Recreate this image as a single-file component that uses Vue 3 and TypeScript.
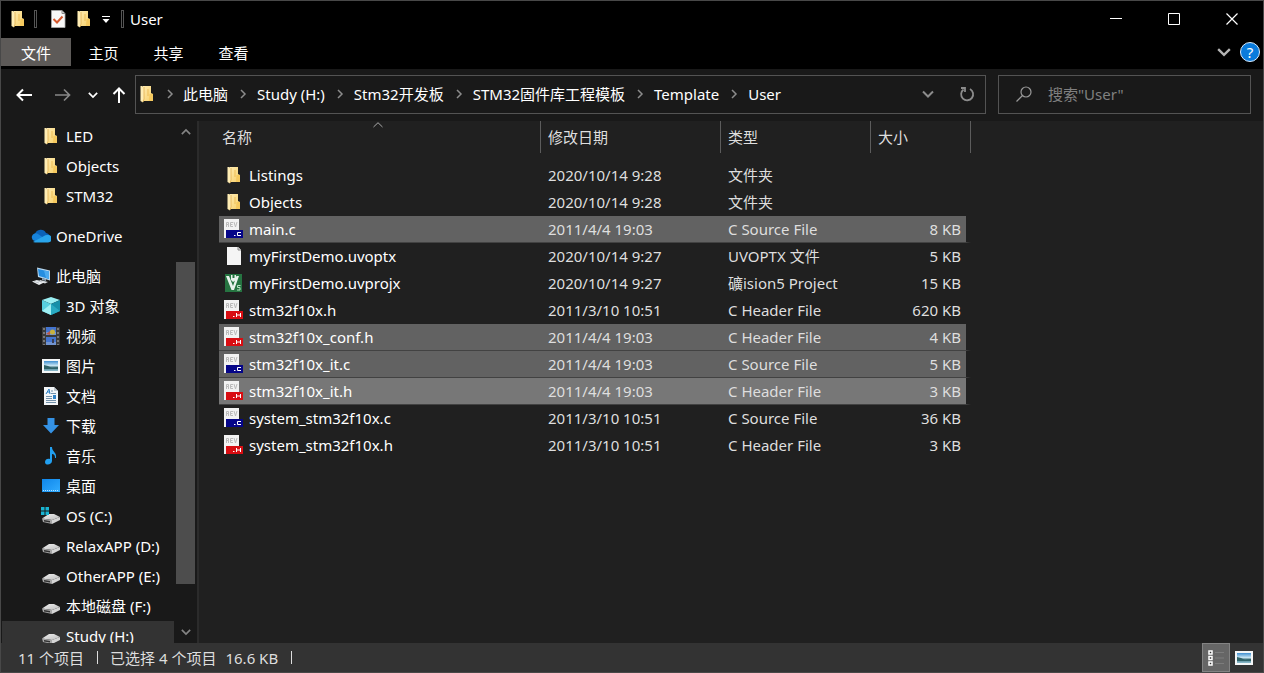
<script setup lang="ts">
import { ref } from 'vue'

interface Place {
  icon: string
  label: string
  level: number
  spaced?: boolean
  current?: boolean
}

interface FileRow {
  icon: string
  name: string
  date: string
  type: string
  size: string
  state?: 'selected' | 'focused'
}

const tabs = ['主页', '共享', '查看']
const crumbs = ['此电脑', 'Study (H:)', 'Stm32开发板', 'STM32固件库工程模板', 'Template', 'User']
const query = ref('')

const places: Place[] = [
  { icon: 'folder', label: 'LED', level: 2 },
  { icon: 'folder', label: 'Objects', level: 2 },
  { icon: 'folder', label: 'STM32', level: 2 },
  { icon: 'cloud', label: 'OneDrive', level: 1, spaced: true },
  { icon: 'pc', label: '此电脑', level: 1, spaced: true },
  { icon: 'cube', label: '3D 对象', level: 2 },
  { icon: 'film', label: '视频', level: 2 },
  { icon: 'picture', label: '图片', level: 2 },
  { icon: 'document', label: '文档', level: 2 },
  { icon: 'download', label: '下载', level: 2 },
  { icon: 'music', label: '音乐', level: 2 },
  { icon: 'desktop', label: '桌面', level: 2 },
  { icon: 'osdrive', label: 'OS (C:)', level: 2 },
  { icon: 'drive', label: 'RelaxAPP (D:)', level: 2 },
  { icon: 'drive', label: 'OtherAPP (E:)', level: 2 },
  { icon: 'drive', label: '本地磁盘 (F:)', level: 2 },
  { icon: 'drive', label: 'Study (H:)', level: 2, current: true },
]

const files: FileRow[] = [
  { icon: 'folder', name: 'Listings', date: '2020/10/14 9:28', type: '文件夹', size: '' },
  { icon: 'folder', name: 'Objects', date: '2020/10/14 9:28', type: '文件夹', size: '' },
  { icon: 'csource', name: 'main.c', date: '2011/4/4 19:03', type: 'C Source File', size: '8 KB', state: 'selected' },
  { icon: 'blank', name: 'myFirstDemo.uvoptx', date: '2020/10/14 9:27', type: 'UVOPTX 文件', size: '5 KB' },
  { icon: 'uvision', name: 'myFirstDemo.uvprojx', date: '2020/10/14 9:27', type: '礦ision5 Project', size: '15 KB' },
  { icon: 'cheader', name: 'stm32f10x.h', date: '2011/3/10 10:51', type: 'C Header File', size: '620 KB' },
  { icon: 'cheader', name: 'stm32f10x_conf.h', date: '2011/4/4 19:03', type: 'C Header File', size: '4 KB', state: 'selected' },
  { icon: 'csource', name: 'stm32f10x_it.c', date: '2011/4/4 19:03', type: 'C Source File', size: '5 KB', state: 'selected' },
  { icon: 'cheader', name: 'stm32f10x_it.h', date: '2011/4/4 19:03', type: 'C Header File', size: '3 KB', state: 'focused' },
  { icon: 'csource', name: 'system_stm32f10x.c', date: '2011/3/10 10:51', type: 'C Source File', size: '36 KB' },
  { icon: 'cheader', name: 'system_stm32f10x.h', date: '2011/3/10 10:51', type: 'C Header File', size: '3 KB' },
]
</script>

<template>
  <div class="window">
    <svg class="defs" aria-hidden="true">
      <defs>
        <linearGradient id="g-folder" x1="0" x2="1" y1="0" y2="1">
          <stop offset="0" stop-color="#ffebb0" /><stop offset="1" stop-color="#f7cf68" />
        </linearGradient>
        <linearGradient id="g-sky" x1="0" x2="0" y1="0" y2="1">
          <stop offset="0" stop-color="#3f8fd0" /><stop offset="0.5" stop-color="#d3ecf6" />
          <stop offset="0.6" stop-color="#3d6e78" /><stop offset="1" stop-color="#8fc0d2" />
        </linearGradient>
        <linearGradient id="g-blue" x1="0" x2="1" y1="0" y2="1">
          <stop offset="0" stop-color="#0f86ea" /><stop offset="1" stop-color="#32acff" />
        </linearGradient>
        <linearGradient id="g-drive" x1="0" x2="1" y1="0" y2="1">
          <stop offset="0" stop-color="#f0f0f0" /><stop offset="1" stop-color="#bcbcbc" />
        </linearGradient>
      </defs>
      <symbol id="folder" viewBox="0 0 20 20">
        <path d="M6 2h8v7l2 1v7H6z" fill="url(#g-folder)" />
        <path d="M10 5h2v7h-2z" fill="#edbd58" opacity="0.500" />
        <path d="M12.500 10H16v7h-4z" fill="#f5c95f" />
        <path d="M3.500 2H5l2 1v12l-1 3.500-2.500-1.500z" fill="#ffedb4" />
        <path d="M7 3v12l-1 3" fill="none" stroke="#dca842" stroke-width="0.700" />
      </symbol>
      <symbol id="check-doc" viewBox="0 0 20 20">
        <path d="M3.500 1.500H14l3 3v14H3.500z" fill="#f8f8f8" stroke="#aaa" stroke-width="0.800" />
        <path d="M14 1.500v3h3" fill="none" stroke="#888" />
        <path d="M5.500 10l3.500 3.500 5.500-6" fill="none" stroke="#d4572d" stroke-width="2" />
      </symbol>
      <symbol id="cloud" viewBox="0 0 20 20">
        <path d="M4 8a6 6 0 0 1 11-1 5 5 0 0 1 4 4l-7 3-9-4z" fill="#0b62b8" />
        <path d="M1 10a4 4 0 0 1 6-2l10 7H4a4 4 0 0 1-3-5z" fill="#1683dc" />
        <path d="M2 16l11-6a5 5 0 0 1 4-1 3.500 3.500 0 0 1 0 7.500H4z" fill="#29a5ec" />
      </symbol>
      <symbol id="pc" viewBox="0 0 20 20">
        <path d="M6 1.500l13 3v10L7 11z" fill="#b9d7ed" /><path d="M7 3l11 2.500v7.500L8 10z" fill="#258ee0" />
        <path d="M13 4.500l5 1V13l-3-1z" fill="#4aaaf0" />
        <path d="M11 12l4 1v2l-4-1z" fill="#8ca1b2" /><path d="M9 14l8 2-3 1.500-6-2z" fill="#d7dce0" />
        <path d="M1 15.500l5-1.500 7 2.500-5 2.500z" fill="#edf0f2" /><path d="M3 15.500l5 1.500m-2-2.500l5 1.500" stroke="#a9b1b9" stroke-width="0.700" />
      </symbol>
      <symbol id="cube" viewBox="0 0 20 20">
        <path d="M10 1l9 3-9 4-9-4z" fill="#9aeff3" /><path d="M1 4l9 4v11l-9-4z" fill="#57cfdf" />
        <path d="M19 4l-9 4v11l9-4z" fill="#168fa9" /><path d="M1 15l9-7v11z" fill="#9eeff3" />
        <path d="M10 8l9 7-9 4z" fill="#29aac2" />
      </symbol>
      <symbol id="film" viewBox="0 0 20 20">
        <path d="M1 1h18v18H1z" fill="#3a3a3a" /><path d="M5 1h10v8H5zM5 11h10v8H5z" fill="#4474ce" />
        <path d="M5 6h10v3H5zM5 16h10v3H5z" fill="#7294d0" />
        <circle cx="11.500" cy="6" r="2.500" fill="#c8b13c" /><path d="M5 8l4-3v4z" fill="#b85a4a" /><path d="M11 13h2v4h-2z" fill="#3a3f55" />
        <path d="M3 2v17M17 2v17" stroke="#777" stroke-width="2" stroke-dasharray="2 2" />
      </symbol>
      <symbol id="picture" viewBox="0 0 20 20">
        <path d="M1 3h18v14H1z" fill="#f4f6f7" /><path d="M3 5h14v10H3z" fill="url(#g-sky)" />
        <path d="M3 9l4 1 4 2 6-1v2H3z" fill="#2f6268" />
      </symbol>
      <symbol id="document" viewBox="0 0 20 20">
        <path d="M3 1h10l4 4v14H3z" fill="#f3f6f8" /><path d="M13 1v4h4" fill="#bdc7cf" />
        <path d="M5 8l3-5 1 5M6 6h3" fill="none" stroke="#287ec4" />
        <path d="M10 5h2M10 7.500h5M5 10.500h6M5 12.500h6M5 14.500h10M5 16.500h10" stroke="#7291aa" />
        <path d="M12 9h3v4h-3z" fill="#3284c7" />
      </symbol>
      <symbol id="download" viewBox="0 0 20 20"><path d="M6.500 2h7v7H18l-8 8.500L2 9h4.500z" fill="#3492e5" /></symbol>
      <symbol id="music" viewBox="0 0 20 20">
        <path d="M9 1h2c0 5 5 5 4 11h-1c0-3-1-4-3-4v7c0 4-7 5-7 1 0-3 3-4 5-3z" fill="#22a0f0" />
      </symbol>
      <symbol id="desktop" viewBox="0 0 20 20">
        <path d="M1 3h18v13H1z" fill="url(#g-blue)" /><path d="M2 14.500h16" stroke="#b6e1ff" stroke-dasharray="1 1" />
      </symbol>
      <symbol id="drive" viewBox="0 0 20 20">
        <path d="M1 12.500l7-4.500h5l6 3-8 3z" fill="url(#g-drive)" /><path d="M1 12.500l10 1.500v4L2 16z" fill="#a5a5a5" />
        <path d="M11 14l8-3v3l-8 4z" fill="#d4d4d4" /><path d="M3 14l6 1v1.500l-6-1z" fill="#333" />
      </symbol>
      <symbol id="osdrive" viewBox="0 0 20 20">
        <use href="#drive" width="20" height="20" />
        <path d="M0 1h3.500v3.500H0zM4.500 1H8v3.500H4.500zM0 5.500h3.500V9H0zM4.500 5.500H8V9H4.500z" fill="#19b4d2" />
      </symbol>
      <symbol id="blank" viewBox="0 0 20 20">
        <path d="M3 1h11l3 3v15H3z" fill="#f5f5f5" /><path d="M14 1v3h3" fill="#ddd" stroke="#888" />
      </symbol>
      <symbol id="uvision" viewBox="0 0 20 20">
        <path d="M1 1h17v18H1z" fill="#267441" />
        <path d="M2 3h3l4 10 3.500-10H15l-5 14H7.500z" fill="#e9f2ec" />
        <path d="M7 2h1.500v3h2V2H12v5l-3 2-2-2z" fill="#e9f2ec" />
        <path d="M16.500 12.500h-3v2h2.500v2.500h-3" fill="none" stroke="#b9e2c4" />
      </symbol>
      <symbol id="page" viewBox="0 0 20 20">
        <path d="M0 0h15v19H0z" fill="#f2f2f2" />
        <path d="M2.500 8V3.500h2v2h-2m2 0V8M9 3.500H6.500v4H9M6.500 5.500h2M10 3l1.500 5L13 3" fill="none" stroke="#bbb" />
      </symbol>
      <symbol id="csource" viewBox="0 0 20 20">
        <use href="#page" width="20" height="20" /><path d="M2 11h17v8H2z" fill="#050588" />
        <path d="M10 16.500h1.500M17 13.500h-3.500v3H17" fill="none" stroke="#fff" />
      </symbol>
      <symbol id="cheader" viewBox="0 0 20 20">
        <use href="#page" width="20" height="20" /><path d="M2 11h17v8H2z" fill="#d80d12" />
        <path d="M9 16.500h1.500M12.500 13v4M16.500 13v4M12.500 15h4" fill="none" stroke="#fff" />
      </symbol>
      <symbol id="right" viewBox="0 0 12 12"><path d="M4 2l4 4-4 4" fill="none" stroke="currentColor" stroke-width="1.500" /></symbol>
      <symbol id="down" viewBox="0 0 12 12"><path d="M1 3.500l5 5 5-5" fill="none" stroke="currentColor" stroke-width="2" /></symbol>
    </svg>

    <header class="titlebar">
      <svg class="icon"><use href="#folder" /></svg>
      <span class="divider first"></span>
      <button class="quick" aria-label="属性"><svg class="icon"><use href="#check-doc" /></svg></button>
      <button class="quick" aria-label="新建文件夹"><svg class="icon"><use href="#folder" /></svg></button>
      <button class="quick more" aria-label="自定义快速访问工具栏">
        <svg width="10" height="10" viewBox="0 0 10 10"><path d="M1 2.500h8" stroke="#fff" /><path d="M1.500 5h7L5 9z" fill="#fff" /></svg>
      </button>
      <span class="divider"></span>
      <h1>User</h1>
      <div class="controls">
        <button aria-label="最小化"><svg width="12" height="12"><path d="M0 5.500h12" stroke="#fff" /></svg></button>
        <button aria-label="最大化"><svg width="12" height="12"><path d="M.5.5h11v11H.5z" fill="none" stroke="#fff" /></svg></button>
        <button aria-label="关闭"><svg width="12" height="12"><path d="M.5.5l11 11M11.500.5l-11 11" stroke="#fff" stroke-width="1.200" /></svg></button>
      </div>
    </header>

    <nav class="ribbon">
      <button class="file-tab">文件</button>
      <button v-for="tab in tabs" :key="tab" class="tab">{{ tab }}</button>
      <button class="expand" aria-label="展开功能区"><svg width="14" height="14"><use href="#down" /></svg></button>
      <button class="help" aria-label="帮助">?</button>
    </nav>

    <div class="navbar">
      <button class="nav-back" aria-label="后退"><svg width="16" height="16" viewBox="0 0 16 16"><path d="M16 8H2M7 2.500L1.500 8 7 13.500" fill="none" stroke="#fff" stroke-width="2" /></svg></button>
      <button class="nav-forward" aria-label="前进"><svg width="16" height="16" viewBox="0 0 16 16"><path d="M0 8h14M9 2.500L14.500 8 9 13.500" fill="none" stroke="#888" stroke-width="1.700" /></svg></button>
      <button class="nav-recent" aria-label="最近位置"><svg width="10" height="10"><use href="#down" /></svg></button>
      <button class="nav-up" aria-label="向上"><svg width="14" height="16" viewBox="0 0 14 16"><path d="M7 16V2M1.500 7L7 1.500 12.500 7" fill="none" stroke="#fff" stroke-width="2" /></svg></button>
      <div class="address">
        <svg class="icon address-icon"><use href="#folder" /></svg>
        <template v-for="crumb in crumbs" :key="crumb">
          <svg class="sep" width="12" height="12"><use href="#right" /></svg>
          <button class="crumb">{{ crumb }}</button>
        </template>
        <button class="address-drop" aria-label="历史记录"><svg width="12" height="12"><use href="#down" /></svg></button>
        <button class="refresh" aria-label="刷新">
          <svg width="16" height="16" viewBox="0 0 16 16"><path d="M11 3a6 6 0 1 1-6.500.5M2 2h4v4" fill="none" stroke="#8c8c8c" stroke-width="1.800" /></svg>
        </button>
      </div>
      <label class="search">
        <svg width="16" height="16" viewBox="0 0 16 16"><circle cx="10" cy="6" r="5" fill="none" stroke="#999" stroke-width="1.200" /><path d="M6.500 9.500L.5 15.500" stroke="#999" stroke-width="1.200" /></svg>
        <input v-model="query" type="text" placeholder="搜索&quot;User&quot;" aria-label="搜索" />
      </label>
    </div>

    <div class="body">
      <nav class="sidebar">
        <ul class="places">
          <li v-for="place in places" :key="place.label" :class="{ spaced: place.spaced }">
            <a href="#" :class="['place', 'level-' + place.level, { current: place.current }]">
              <svg class="icon"><use :href="'#' + place.icon" /></svg>
              <span>{{ place.label }}</span>
            </a>
          </li>
        </ul>
        <div class="scrollbar">
          <svg class="flip" width="10" height="10"><use href="#down" /></svg>
          <div class="track"><div class="thumb"></div></div>
          <svg width="10" height="10"><use href="#down" /></svg>
        </div>
      </nav>

      <main class="listing">
        <table>
          <colgroup><col class="c-name" /><col class="c-date" /><col class="c-type" /><col class="c-size" /></colgroup>
          <thead>
            <tr>
              <th scope="col">
                名称
                <svg class="sort" width="10" height="6" viewBox="0 0 10 6"><path d="M.5 5L5 .7 9.500 5" fill="none" stroke="#aaa" /></svg>
              </th>
              <th scope="col">修改日期</th>
              <th scope="col">类型</th>
              <th scope="col">大小</th>
            </tr>
          </thead>
          <tbody>
            <tr v-for="file in files" :key="file.name" :class="file.state">
              <td><span class="name"><svg class="icon"><use :href="'#' + file.icon" /></svg>{{ file.name }}</span></td>
              <td>{{ file.date }}</td>
              <td>{{ file.type }}</td>
              <td>{{ file.size }}</td>
            </tr>
          </tbody>
        </table>
      </main>
    </div>

    <footer class="status">
      <span class="count">11 个项目</span>
      <span class="bar"></span>
      <span class="chosen">已选择 4 个项目</span>
      <span class="total">16.6 KB</span>
      <span class="bar"></span>
      <div class="views">
        <button class="active" aria-label="详细信息">
          <svg width="20" height="20" viewBox="0 0 20 20">
            <path d="M3 3h3v3H3zM3 8.500h3v3H3zM3 14h3v3H3z" fill="#333" stroke="#fff" stroke-width="1.500" />
            <path d="M9 4.500h9M9 10h9M9 15.500h9" stroke="#7c7c7c" />
          </svg>
        </button>
        <button aria-label="大缩略图"><svg class="icon"><use href="#picture" /></svg></button>
      </div>
    </footer>
  </div>
</template>

<style>
body {
  margin: 0;
  background: #202020;
}
</style>

<style scoped>
.window {
  box-sizing: border-box;
  display: flex;
  flex-direction: column;
  height: 100vh;
  overflow: hidden;
  border: 1px solid #484848;
  background: #191919;
  color: #fff;
  font: 15px/20px "Noto Sans", "Noto Sans CJK SC", sans-serif;
}
.defs {
  position: absolute;
  width: 0;
  height: 0;
}
svg {
  flex: none;
}
.icon {
  width: 20px;
  height: 20px;
}
button {
  display: flex;
  align-items: center;
  justify-content: center;
  flex: none;
  margin: 0;
  padding: 0;
  border: 0;
  background: none;
  color: inherit;
  font: inherit;
  white-space: nowrap;
}
.titlebar {
  box-sizing: border-box;
  display: flex;
  align-items: center;
  height: 37px;
  padding: 0 2px 2px 7px;
  background: #000;
}
.divider {
  box-sizing: border-box;
  width: 3px;
  height: 18px;
  border: 1px solid #555;
}
.divider.first {
  margin: 0 8px 0 6px;
}
.quick {
  width: 26px;
}
.quick.more {
  width: 18px;
  margin-right: 6px;
}
h1 {
  margin: 0 0 0 6px;
  font-size: 15px;
  font-weight: 400;
}
.controls {
  display: flex;
  align-self: stretch;
  margin-left: auto;
}
.controls button {
  width: 58px;
}
.ribbon {
  display: flex;
  align-items: center;
  height: 28px;
  padding-bottom: 3px;
  background: #000;
}
.file-tab,
.tab {
  width: 65px;
  height: 28px;
  padding-top: 2px;
}
.file-tab {
  width: 70px;
  background: #5d5a58;
}
.expand {
  margin-left: auto;
  color: #b4b4b4;
}
.help {
  width: 20px;
  height: 20px;
  margin: 0 3px 0 9px;
  border: 1px solid #d8ecff;
  border-radius: 50%;
  background: #0a7bdc;
}
.navbar {
  display: flex;
  align-items: center;
  height: 39px;
  padding: 6px 12px 7px 15px;
}
.nav-back {
  width: 16px;
}
.nav-forward {
  width: 16px;
  margin-left: 23px;
}
.nav-recent {
  width: 10px;
  margin-left: 17px;
}
.nav-up {
  width: 14px;
  margin: 0 9px 0 14px;
}
.address {
  box-sizing: border-box;
  display: flex;
  flex: 1;
  align-items: center;
  align-self: stretch;
  padding-bottom: 2px;
  border: 1px solid #535353;
}
.address-icon {
  margin-left: 1px;
}
.sep {
  margin: 0 8px 0 9px;
  color: #8c8c8c;
}
.address-icon + .sep {
  margin: 0 7px;
}
.address-drop {
  width: 40px;
  margin-left: auto;
  color: #8c8c8c;
}
.refresh {
  width: 37px;
}
.search {
  box-sizing: border-box;
  display: flex;
  align-items: center;
  align-self: stretch;
  width: 253px;
  margin-left: 12px;
  padding: 0 0 2px 17px;
  border: 1px solid #535353;
}
.search input {
  flex: 1;
  min-width: 0;
  margin-left: 16px;
  padding: 0;
  border: 0;
  outline: 0;
  background: none;
  color: #fff;
  font: inherit;
}
.search input::placeholder {
  color: #808080;
  opacity: 1;
}
.body {
  display: flex;
  flex: 1;
  min-height: 0;
}
.sidebar {
  display: flex;
  width: 196px;
  border-right: 2px solid #2b2b2b;
}
.places {
  flex: 1;
  margin: 0;
  padding: 0 1px;
  overflow: hidden;
  list-style: none;
}
.spaced {
  margin-top: 10px;
}
.place {
  display: flex;
  align-items: center;
  gap: 5px;
  height: 30px;
  color: #fff;
  text-decoration: none;
  white-space: nowrap;
}
.level-1 {
  padding-left: 29px;
}
.level-2 {
  padding-left: 39px;
}
.current {
  background: #333;
}
.scrollbar {
  box-sizing: border-box;
  display: flex;
  flex-direction: column;
  align-items: center;
  width: 22px;
  padding: 6px 2px 6px 1px;
  color: #858585;
}
.flip {
  transform: rotate(180deg);
}
.track {
  display: grid;
  flex: 1;
  grid-template-rows: 125fr 322fr 43fr;
  align-self: stretch;
}
.thumb {
  grid-row: 2;
  background: #4d4d4d;
}
.listing {
  flex: 1;
  min-width: 0;
  padding-left: 20px;
  background: #202020;
}
table {
  width: 752px;
  table-layout: fixed;
  border-spacing: 0;
}
.c-name {
  width: 321px;
}
.c-date {
  width: 180px;
}
.c-type {
  width: 150px;
}
.c-size {
  width: 101px;
}
th {
  position: relative;
  height: 32px;
  padding: 0 0 0 7px;
  border-left: 1px solid #5c5c5c;
  color: #dedede;
  font-weight: 400;
  text-align: left;
}
th:first-child {
  padding-left: 3px;
  border-left: 0;
}
th:last-child {
  border-right: 1px solid #5c5c5c;
}
.sort {
  position: absolute;
  top: 1px;
  left: calc(50% - 7px);
}
tbody::before {
  content: "";
  display: block;
  height: 9px;
}
td {
  box-sizing: border-box;
  height: 27px;
  padding: 0 0 0 8px;
  border-bottom: 1px solid transparent;
  background-clip: padding-box;
  color: #dedede;
  white-space: nowrap;
}
td:first-child {
  padding-left: 5px;
  color: #fff;
}
td:last-child {
  padding: 0 5px 0 0;
  border-right: 5px solid transparent;
  text-align: right;
}
.name {
  display: flex;
  align-items: center;
  gap: 5px;
}
.selected td {
  border-bottom-color: #424242;
  background-color: #626262;
}
.focused td {
  border-bottom-color: #424242;
  background-color: #777;
}
.status {
  box-sizing: border-box;
  display: flex;
  align-items: center;
  height: 29px;
  padding-left: 17px;
  background: #333;
  color: #dedede;
}
.bar {
  width: 1px;
  height: 13px;
  margin: 0 12px 0 13px;
  background: #ddd;
}
.total {
  margin-left: 9px;
}
.views {
  display: flex;
  align-self: stretch;
  margin-left: auto;
  padding-right: 5px;
}
.views button {
  width: 28px;
}
.views .active {
  box-sizing: border-box;
  border: 1px solid #838383;
  background: #666;
}
</style>
